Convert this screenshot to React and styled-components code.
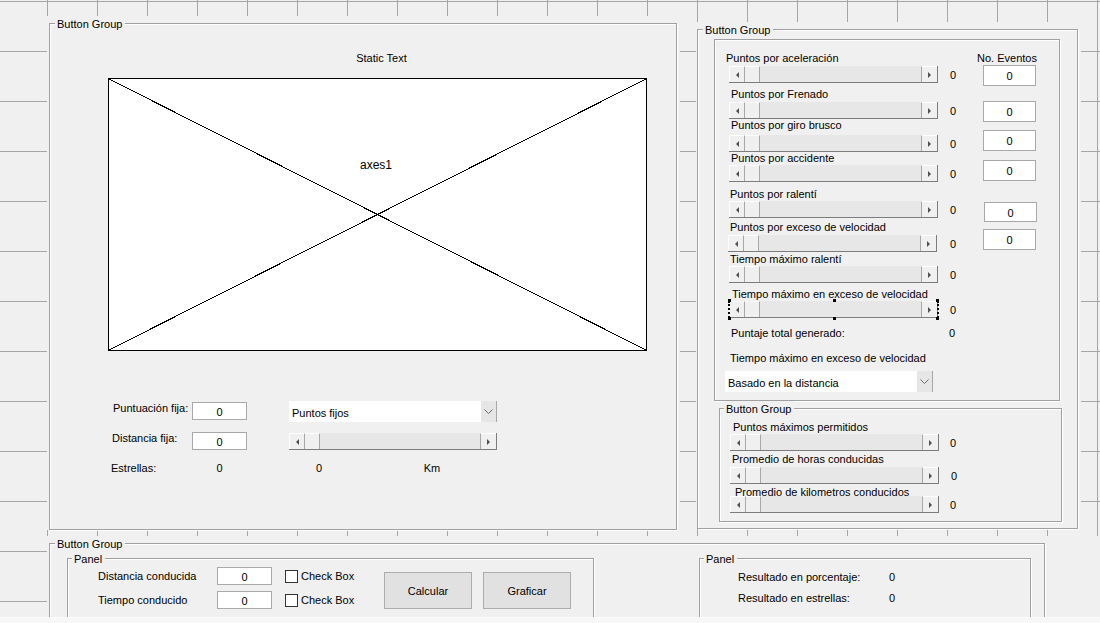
import React from 'react';
import styled, { createGlobalStyle } from 'styled-components';

const GlobalStyle = createGlobalStyle`
  html, body { margin: 0; padding: 0; background: #f0f0f0; }
  body { font-family: "Liberation Sans", Arial, sans-serif; font-size: 11px; color: #000; }
  * { box-sizing: border-box; }
`;

const FONT = `"Liberation Sans", Arial, sans-serif`;

const Screen = styled.div`
  width: 1100px;
  height: 623px;
  overflow: hidden;
  display: flex;
  flex-direction: column;
  background: #f0f0f0;
`;

const Canvas = styled.div`
  flex: none;
  height: 617px;
  overflow: hidden;
  padding: 16px 0 0 47px;
  background-color: #f0f0f0;
  background-image:
    linear-gradient(to right, transparent 47px, #a6a6a6 47px, #a6a6a6 48px, transparent 48px),
    linear-gradient(to bottom, transparent 1px, #a6a6a6 1px, #a6a6a6 2px, transparent 2px);
  background-size: 50px 100%, 100% 50px;
`;

const Footer = styled.div`
  flex: 1;
  background: #f7f7f7;
  border-top: 1px solid #fdfdfd;
`;

const TopRow = styled.div`
  display: flex;
  align-items: flex-start;
`;

const Cover = styled.div`
  flex: none;
  background: #f0f0f0;
  padding: 0 ${p => p.$pr ?? 3}px ${p => p.$pb ?? 0}px ${p => p.$pl ?? 2}px;
  margin-left: ${p => p.$ml || 0}px;
  margin-top: ${p => p.$mt || 0}px;
`;

const Group = styled.fieldset`
  margin: 0 0 0 ${p => p.$ml || 0}px;
  padding: 0;
  min-width: 0;
  flex: none;
  width: ${p => p.$w}px;
  height: ${p => p.$h}px;
  border: 1px solid #a0a0a0;
  box-shadow: 1px 1px 0 #fff, inset 1px 1px 0 #fff;
  background: #f0f0f0;
`;

const Legend = styled.legend`
  margin-left: ${p => p.$m ?? 5}px;
  padding: 2px 3px 0 2px;
  font: 11px/13px ${FONT};
  background: #f0f0f0;
  color: #000;
`;

const PlainPanel = styled.div`
  flex: none;
  display: flex;
  width: ${p => p.$w}px;
  height: ${p => p.$h}px;
  margin-left: ${p => p.$ml || 0}px;
  margin-top: ${p => p.$mt || 0}px;
  border: 1px solid #a0a0a0;
  box-shadow: 1px 1px 0 #fff, inset 1px 1px 0 #fff;
`;

const Col = styled.div`
  display: flex;
  flex-direction: column;
  flex: none;
  width: ${p => (p.$w ? `${p.$w}px` : 'auto')};
`;

const Text = styled.div`
  font: 11px/12px ${FONT};
  height: 12px;
  white-space: nowrap;
  color: #000;
  margin-left: ${p => p.$x || 0}px;
  margin-top: ${p => p.$y || 0}px;
  width: ${p => (p.$w ? `${p.$w}px` : 'auto')};
  text-align: ${p => p.$align || 'left'};
  flex: none;
`;

/* ---------- slider ---------- */
const SliderBox = styled.div`
  position: relative;
  flex: none;
  display: flex;
  width: ${p => p.$w}px;
  height: 17px;
  margin-left: ${p => p.$x || 0}px;
  background: #e7e7e7;
  border-bottom: 1px solid #7c7c7c;
  border-right: 1px solid #7c7c7c;
`;

const ArrowBtn = styled.div`
  flex: none;
  width: 16px;
  display: flex;
  align-items: center;
  justify-content: center;
  background: #f0f0f0;
  border-top: 1px solid #fff;
  border-left: ${p => (p.$side === 'left' ? '1px solid #fff' : '1px solid #a8a8a8')};
  border-right: ${p => (p.$side === 'left' ? '1px solid #a8a8a8' : 'none')};
`;

const Tri = styled.span`
  width: 0;
  height: 0;
  border-top: 3.5px solid transparent;
  border-bottom: 3.5px solid transparent;
  ${p => (p.$dir === 'left' ? 'border-right: 3px solid #505050;' : 'border-left: 3px solid #505050;')}
`;

const Thumb = styled.div`
  flex: none;
  width: 15px;
  background: #f0f0f0;
  border-top: 1px solid #fff;
  border-right: 1px solid #a8a8a8;
`;

const Track = styled.div`
  flex: 1;
  background: #e7e7e7;
`;

const Selection = styled.div`
  position: absolute;
  left: -1px;
  right: -2px;
  top: 0;
  bottom: -1px;
  border-left: 2px dotted #000;
  border-right: 2px dotted #000;
  pointer-events: none;
`;

const Handle = styled.span`
  position: absolute;
  width: 3px;
  height: 3px;
  background: #000;
  left: ${p => p.$l};
  top: ${p => p.$t};
`;

function Slider({ w = 209, x = 0, selected }) {
  return (
    <SliderBox $w={w} $x={x}>
      <ArrowBtn $side="left"><Tri $dir="left" /></ArrowBtn>
      <Thumb />
      <Track />
      <ArrowBtn $side="right"><Tri $dir="right" /></ArrowBtn>
      {selected && (
        <Selection>
          <Handle $l="-2px" $t="-2px" />
          <Handle $l="calc(50% - 1px)" $t="-2px" />
          <Handle $l="calc(100% - 1px)" $t="-2px" />
          <Handle $l="-2px" $t="calc(100% - 1px)" />
          <Handle $l="calc(50% - 1px)" $t="calc(100% - 1px)" />
          <Handle $l="calc(100% - 1px)" $t="calc(100% - 1px)" />
        </Selection>
      )}
    </SliderBox>
  );
}

const SliderLine = styled.div`
  display: flex;
  align-items: center;
  margin-top: ${p => p.$y || 0}px;
`;

const Val = styled.span`
  font: 11px/12px ${FONT};
  margin-left: ${p => p.$x ?? 12}px;
  margin-top: ${p => p.$y ?? 0}px;
`;

const Block = styled.div`
  display: flex;
  flex-direction: column;
  margin-top: ${p => p.$mt || 0}px;
`;

function SliderItem({ label, mt, lx, sy, sx, vx, selected }) {
  return (
    <Block $mt={mt}>
      <Text $x={lx}>{label}</Text>
      <SliderLine $y={sy}>
        <Slider x={sx} selected={selected} />
        <Val $x={vx}>0</Val>
      </SliderLine>
    </Block>
  );
}

/* ---------- inputs ---------- */
const EditBox = styled.div`
  flex: none;
  width: ${p => p.$w}px;
  height: ${p => p.$h}px;
  margin-left: ${p => p.$ml || 0}px;
  margin-top: ${p => p.$mt || 0}px;
  background: #fff;
  border: 1px solid #a9a9a9;
  display: flex;
  align-items: center;
  justify-content: center;
  padding-top: 1px;
  font: 11px/12px ${FONT};
`;

const PopupBox = styled.div`
  flex: none;
  display: flex;
  width: ${p => p.$w}px;
  height: ${p => p.$h}px;
  margin-left: ${p => p.$ml || 0}px;
  margin-top: ${p => p.$mt || 0}px;
  background: #fff;
`;

const PopupText = styled.div`
  flex: 1;
  padding-left: 3px;
  display: flex;
  align-items: center;
  padding-top: 2px;
  font: 11px/12px ${FONT};
  white-space: nowrap;
`;

const PopupArrow = styled.div`
  flex: none;
  width: 16px;
  background: #e6e6e6;
  border-right: 1px solid #a8a8a8;
  display: flex;
  align-items: center;
  justify-content: center;
`;

function Popup({ text, w, h = 21, ml, mt }) {
  return (
    <PopupBox $w={w} $h={h} $ml={ml} $mt={mt}>
      <PopupText>{text}</PopupText>
      <PopupArrow>
        <svg width="9" height="5" viewBox="0 0 9 5">
          <polyline points="0.5,0.5 4.5,4.5 8.5,0.5" fill="none" stroke="#6a6a6a" strokeWidth="1" />
        </svg>
      </PopupArrow>
    </PopupBox>
  );
}

const CheckSquare = styled.span`
  flex: none;
  width: 13px;
  height: 13px;
  margin-left: ${p => p.$ml || 0}px;
  background: #fff;
  border: 1px solid #333;
`;

const Button = styled.div`
  flex: none;
  width: ${p => p.$w}px;
  height: 37px;
  margin-left: ${p => p.$ml || 0}px;
  background: #e1e1e1;
  border: 1px solid #adadad;
  display: flex;
  align-items: center;
  justify-content: center;
  font: 11px/12px ${FONT};
`;

/* ---------- left panel ---------- */
const StaticTitle = styled.div`
  width: 539px;
  margin: 21px 0 0 58px;
  padding-left: 8px;
  text-align: center;
  font: 11px/12px ${FONT};
`;

const Axes = styled.div`
  position: relative;
  width: 539px;
  height: 273px;
  margin: 14px 0 0 58px;
  background: #fff;
  border: 1px solid #000;
`;

const AxesDrawing = styled.svg`
  position: absolute;
  inset: 0;
  width: 100%;
  height: 100%;
`;

const AxesLabel = styled.span`
  position: absolute;
  left: 251px;
  top: 79px;
  font: 12px/14px ${FONT};
`;

const FormRow = styled.div`
  display: flex;
  align-items: flex-start;
  padding-left: ${p => p.$pl ?? 61}px;
  margin-top: ${p => p.$mt || 0}px;
`;

const Cell = styled.div`
  flex: none;
  width: ${p => p.$w}px;
  margin-left: ${p => p.$ml || 0}px;
  margin-top: ${p => p.$mt || 0}px;
  padding-left: ${p => p.$pl || 0}px;
  text-align: ${p => p.$align || 'left'};
  font: 11px/12px ${FONT};
  white-space: nowrap;
`;

/* ---------- bottom ---------- */
const BottomRow = styled.div`
  display: flex;
  align-items: flex-start;
`;

const LineRow = styled.div`
  display: flex;
  align-items: center;
  height: ${p => p.$h || 18}px;
  margin-top: ${p => p.$mt || 0}px;
  padding-left: ${p => p.$pl || 0}px;
`;

const FormCol = styled.div`
  flex: none;
  width: 316px;
`;

const ButtonsRow = styled.div`
  display: flex;
  margin-top: 6px;
`;

const PanelBody = styled.div`
  display: flex;
  align-items: flex-start;
`;

const rightItems = [
  { label: 'Puntos por aceleración', mt: 12, lx: 11, sy: 2, sx: 14 },
  { label: 'Puntos por Frenado', mt: 5, lx: 16, sy: 2, sx: 14 },
  { label: 'Puntos por giro brusco', mt: 0, lx: 16, sy: 4, sx: 14 },
  { label: 'Puntos por accidente', mt: 0, lx: 16, sy: 1, sx: 14 },
  { label: 'Puntos por ralentí', mt: 6, lx: 15, sy: 1, sx: 14 },
  { label: 'Puntos por exceso de velocidad', mt: 3, lx: 15, sy: 2, sx: 13, vx: 13 },
  { label: 'Tiempo máximo ralentí', mt: 1, lx: 15, sy: 1, sx: 14 },
  { label: 'Tiempo máximo en exceso de velocidad', mt: 5, lx: 17, sy: 1, sx: 14, selected: true },
];

const eventBoxes = [
  { mt: 1, ml: 6, h: 21 },
  { mt: 15, ml: 6, h: 21 },
  { mt: 8, ml: 6, h: 21 },
  { mt: 9, ml: 6, h: 21 },
  { mt: 21, ml: 7, h: 20 },
  { mt: 7, ml: 6, h: 21 },
];

const subItems = [
  { label: 'Puntos máximos permitidos', mt: 5, lx: 13, sy: 1, sx: 10, vx: 11 },
  { label: 'Promedio de horas conducidas', mt: 2, lx: 12, sy: 2, sx: 10, vx: 12 },
  { label: 'Promedio de kilometros conducidos', mt: 2, lx: 15, sy: -2, sx: 10, vx: 11 },
];

export default function App() {
  return (
    <>
      <GlobalStyle />
      <Screen>
        <Canvas>
          <TopRow>
            {/* Left button group */}
            <Cover $pl={2} $pr={3}>
              <Group $w={628} $h={514}>
                <Legend>Button Group</Legend>
                <StaticTitle>Static Text</StaticTitle>
                <Axes>
                  <AxesDrawing viewBox="0 0 537 271" preserveAspectRatio="none" shapeRendering="crispEdges">
                    <line x1="0" y1="0" x2="537" y2="271" stroke="#000" strokeWidth="1" />
                    <line x1="0" y1="271" x2="537" y2="0" stroke="#000" strokeWidth="1" />
                  </AxesDrawing>
                  <AxesLabel>axes1</AxesLabel>
                </Axes>

                <FormRow $mt={50}>
                  <Cell $w={81} $pl={2} $mt={1}>Puntuación fija:</Cell>
                  <EditBox $w={55} $h={18} $mt={1}>0</EditBox>
                  <Popup text="Puntos fijos" w={208} h={21} ml={42} />
                </FormRow>
                <FormRow $mt={10}>
                  <Cell $w={81} $pl={1}>Distancia fija:</Cell>
                  <EditBox $w={55} $h={18}>0</EditBox>
                  <Cell $w={208} $ml={42} $mt={1}>
                    <Slider w={208} />
                  </Cell>
                </FormRow>
                <FormRow $mt={12}>
                  <Cell $w={81}>Estrellas:</Cell>
                  <Cell $w={55} $align="center">0</Cell>
                  <Cell $w={60} $ml={42} $align="center">0</Cell>
                  <Cell $w={130} $ml={18} $align="center">Km</Cell>
                </FormRow>
              </Group>
            </Cover>

            {/* Right button group */}
            <Cover $ml={16} $mt={6} $pl={1} $pr={3}>
              <Group $w={381} $h={507}>
                <Legend>Button Group</Legend>
                <PlainPanel $w={346} $h={362} $ml={16} $mt={2}>
                  <Col $w={262}>
                    {rightItems.map(it => (
                      <SliderItem key={it.label} {...it} />
                    ))}
                    <Block $mt={9}>
                      <LineRow $h={12}>
                        <Text $x={16} $w={218}>Puntaje total generado:</Text>
                        <Val $x={0}>0</Val>
                      </LineRow>
                    </Block>
                    <Text $x={15} $y={13}>Tiempo máximo en exceso de velocidad</Text>
                    <Popup text="Basado en la distancia" w={208} h={21} ml={10} mt={7} />
                  </Col>
                  <Col>
                    <Text $y={12}>No. Eventos</Text>
                    {eventBoxes.map((b, i) => (
                      <EditBox key={i} $w={53} $h={b.h} $ml={b.ml} $mt={b.mt}>0</EditBox>
                    ))}
                  </Col>
                </PlainPanel>
                <Group $w={343} $h={121} $ml={21}>
                  <Legend $m={4}>Button Group</Legend>
                  {subItems.map(it => (
                    <SliderItem key={it.label} {...it} />
                  ))}
                </Group>
              </Group>
            </Cover>
          </TopRow>

          {/* Bottom button group */}
          <Cover $mt={6} $pl={2} $pr={3}>
            <Group $w={996} $h={100}>
              <Legend>Button Group</Legend>
              <BottomRow>
                <Group $w={527} $h={80} $ml={17}>
                  <Legend $m={4}>Panel</Legend>
                  <PanelBody>
                    <FormCol>
                      <LineRow $mt={1} $pl={30}>
                        <Cell $w={119}>Distancia conducida</Cell>
                        <EditBox $w={55} $h={18}>0</EditBox>
                        <CheckSquare $ml={13} />
                        <Cell $w={60} $ml={3}>Check Box</Cell>
                      </LineRow>
                      <LineRow $mt={6} $pl={30}>
                        <Cell $w={119}>Tiempo conducido</Cell>
                        <EditBox $w={55} $h={18}>0</EditBox>
                        <CheckSquare $ml={13} />
                        <Cell $w={60} $ml={3}>Check Box</Cell>
                      </LineRow>
                    </FormCol>
                    <ButtonsRow>
                      <Button $w={88}>Calcular</Button>
                      <Button $w={88} $ml={11}>Graficar</Button>
                    </ButtonsRow>
                  </PanelBody>
                </Group>
                <Group $w={332} $h={80} $ml={105}>
                  <Legend $m={4}>Panel</Legend>
                  <LineRow $h={12} $mt={5} $pl={38}>
                    <Cell $w={151}>Resultado en porcentaje:</Cell>
                    <Cell $w={20}>0</Cell>
                  </LineRow>
                  <LineRow $h={12} $mt={9} $pl={38}>
                    <Cell $w={151}>Resultado en estrellas:</Cell>
                    <Cell $w={20}>0</Cell>
                  </LineRow>
                </Group>
              </BottomRow>
            </Group>
          </Cover>
        </Canvas>
        <Footer />
      </Screen>
    </>
  );
}
